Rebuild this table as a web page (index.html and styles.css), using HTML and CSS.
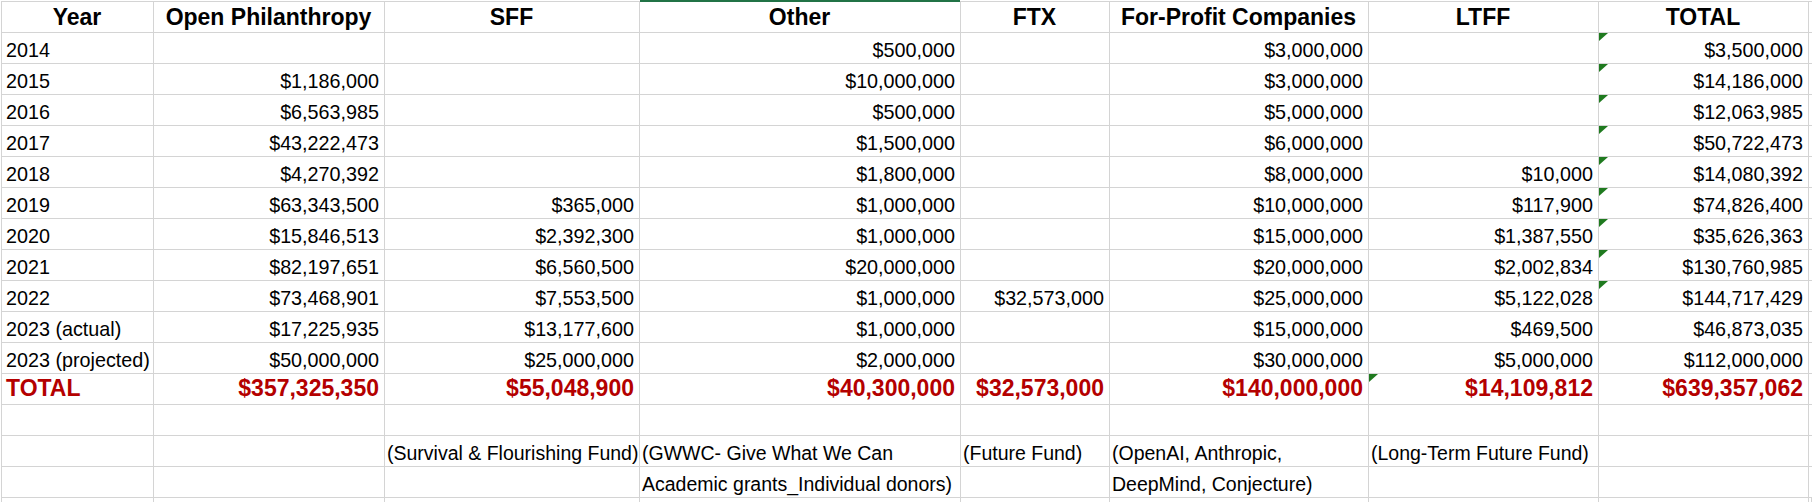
FILE: index.html
```html
<!DOCTYPE html>
<html lang="en">
<head>
<meta charset="utf-8">
<title>AI safety funding by source</title>
<link rel="stylesheet" href="styles.css">
</head>
<body>
<div class="sheet">
  <div class="row">
    <div class="cell head">Year</div>
    <div class="cell head">Open Philanthropy</div>
    <div class="cell head">SFF</div>
    <div class="cell head sel">Other</div>
    <div class="cell head">FTX</div>
    <div class="cell head">For-Profit Companies</div>
    <div class="cell head">LTFF</div>
    <div class="cell head">TOTAL</div>
    <div class="cell"></div>
  </div>
  <div class="row">
    <div class="cell">2014</div>
    <div class="cell num"></div>
    <div class="cell num"></div>
    <div class="cell num">$500,000</div>
    <div class="cell num"></div>
    <div class="cell num">$3,000,000</div>
    <div class="cell num"></div>
    <div class="cell num flag">$3,500,000</div>
    <div class="cell"></div>
  </div>
  <div class="row">
    <div class="cell">2015</div>
    <div class="cell num">$1,186,000</div>
    <div class="cell num"></div>
    <div class="cell num">$10,000,000</div>
    <div class="cell num"></div>
    <div class="cell num">$3,000,000</div>
    <div class="cell num"></div>
    <div class="cell num flag">$14,186,000</div>
    <div class="cell"></div>
  </div>
  <div class="row">
    <div class="cell">2016</div>
    <div class="cell num">$6,563,985</div>
    <div class="cell num"></div>
    <div class="cell num">$500,000</div>
    <div class="cell num"></div>
    <div class="cell num">$5,000,000</div>
    <div class="cell num"></div>
    <div class="cell num flag">$12,063,985</div>
    <div class="cell"></div>
  </div>
  <div class="row">
    <div class="cell">2017</div>
    <div class="cell num">$43,222,473</div>
    <div class="cell num"></div>
    <div class="cell num">$1,500,000</div>
    <div class="cell num"></div>
    <div class="cell num">$6,000,000</div>
    <div class="cell num"></div>
    <div class="cell num flag">$50,722,473</div>
    <div class="cell"></div>
  </div>
  <div class="row">
    <div class="cell">2018</div>
    <div class="cell num">$4,270,392</div>
    <div class="cell num"></div>
    <div class="cell num">$1,800,000</div>
    <div class="cell num"></div>
    <div class="cell num">$8,000,000</div>
    <div class="cell num">$10,000</div>
    <div class="cell num flag">$14,080,392</div>
    <div class="cell"></div>
  </div>
  <div class="row">
    <div class="cell">2019</div>
    <div class="cell num">$63,343,500</div>
    <div class="cell num">$365,000</div>
    <div class="cell num">$1,000,000</div>
    <div class="cell num"></div>
    <div class="cell num">$10,000,000</div>
    <div class="cell num">$117,900</div>
    <div class="cell num flag">$74,826,400</div>
    <div class="cell"></div>
  </div>
  <div class="row">
    <div class="cell">2020</div>
    <div class="cell num">$15,846,513</div>
    <div class="cell num">$2,392,300</div>
    <div class="cell num">$1,000,000</div>
    <div class="cell num"></div>
    <div class="cell num">$15,000,000</div>
    <div class="cell num">$1,387,550</div>
    <div class="cell num flag">$35,626,363</div>
    <div class="cell"></div>
  </div>
  <div class="row">
    <div class="cell">2021</div>
    <div class="cell num">$82,197,651</div>
    <div class="cell num">$6,560,500</div>
    <div class="cell num">$20,000,000</div>
    <div class="cell num"></div>
    <div class="cell num">$20,000,000</div>
    <div class="cell num">$2,002,834</div>
    <div class="cell num flag">$130,760,985</div>
    <div class="cell"></div>
  </div>
  <div class="row">
    <div class="cell">2022</div>
    <div class="cell num">$73,468,901</div>
    <div class="cell num">$7,553,500</div>
    <div class="cell num">$1,000,000</div>
    <div class="cell num">$32,573,000</div>
    <div class="cell num">$25,000,000</div>
    <div class="cell num">$5,122,028</div>
    <div class="cell num flag">$144,717,429</div>
    <div class="cell"></div>
  </div>
  <div class="row">
    <div class="cell">2023 (actual)</div>
    <div class="cell num">$17,225,935</div>
    <div class="cell num">$13,177,600</div>
    <div class="cell num">$1,000,000</div>
    <div class="cell num"></div>
    <div class="cell num">$15,000,000</div>
    <div class="cell num">$469,500</div>
    <div class="cell num">$46,873,035</div>
    <div class="cell"></div>
  </div>
  <div class="row">
    <div class="cell">2023 (projected)</div>
    <div class="cell num">$50,000,000</div>
    <div class="cell num">$25,000,000</div>
    <div class="cell num">$2,000,000</div>
    <div class="cell num"></div>
    <div class="cell num">$30,000,000</div>
    <div class="cell num">$5,000,000</div>
    <div class="cell num">$112,000,000</div>
    <div class="cell"></div>
  </div>
  <div class="row total">
    <div class="cell">TOTAL</div>
    <div class="cell num">$357,325,350</div>
    <div class="cell num">$55,048,900</div>
    <div class="cell num">$40,300,000</div>
    <div class="cell num">$32,573,000</div>
    <div class="cell num">$140,000,000</div>
    <div class="cell num flag">$14,109,812</div>
    <div class="cell num">$639,357,062</div>
    <div class="cell"></div>
  </div>
  <div class="row">
    <div class="cell"></div><div class="cell"></div><div class="cell"></div>
    <div class="cell"></div><div class="cell"></div><div class="cell"></div>
    <div class="cell"></div><div class="cell"></div><div class="cell"></div>
  </div>
  <div class="row">
    <div class="cell"></div>
    <div class="cell"></div>
    <div class="cell note">(Survival &amp; Flourishing Fund)</div>
    <div class="cell note">(GWWC- Give What We Can</div>
    <div class="cell note">(Future Fund)</div>
    <div class="cell note">(OpenAI, Anthropic,</div>
    <div class="cell note">(Long-Term Future Fund)</div>
    <div class="cell"></div>
    <div class="cell"></div>
  </div>
  <div class="row">
    <div class="cell"></div>
    <div class="cell"></div>
    <div class="cell"></div>
    <div class="cell note">Academic grants_Individual donors)</div>
    <div class="cell"></div>
    <div class="cell note">DeepMind, Conjecture)</div>
    <div class="cell"></div>
    <div class="cell"></div>
    <div class="cell"></div>
  </div>
  <div class="row last">
    <div class="cell"></div><div class="cell"></div><div class="cell"></div>
    <div class="cell"></div><div class="cell"></div><div class="cell"></div>
    <div class="cell"></div><div class="cell"></div><div class="cell"></div>
  </div>
</div>
</body>
</html>
```

FILE: styles.css
```css
html, body {
  margin: 0;
  padding: 0;
  background: #ffffff;
  overflow: hidden;
}

body {
  font-family: "Liberation Sans", Arial, sans-serif;
  font-size: 19.75px;
  color: #000000;
}

.sheet {
  display: grid;
  grid-template-columns: 151px 230px 254px 320px 148px 258px 229px 209px 2px;
  grid-template-rows: repeat(16, 30px) 4px;
  gap: 1px;
  width: max-content;
  margin: 1px 0 0 1px;
  padding: 1px 1px 0 1px;
  background: #d4d4d4;
}

.row {
  display: contents;
}

.cell {
  position: relative;
  display: flex;
  align-items: flex-end;
  justify-content: flex-start;
  padding: 0 5px 1px 4px;
  background: #ffffff;
  white-space: nowrap;
  overflow: hidden;
  line-height: normal;
}

.last .cell {
  padding: 0;
}

.num {
  justify-content: flex-end;
}

.head {
  justify-content: center;
  font-weight: bold;
  font-size: 23px;
}

.sel {
  overflow: visible;
  box-shadow: 0 -2px 0 0 #217346;
}

.total .cell {
  font-weight: bold;
  font-size: 23px;
  color: #b40000;
  padding-bottom: 2px;
}

.note {
  padding-left: 2px;
  padding-right: 0;
  font-size: 19.5px;
}

.flag::before {
  content: "";
  position: absolute;
  left: 0;
  top: 0;
  border-top: 8px solid #1f7a1f;
  border-right: 9px solid transparent;
}
```
